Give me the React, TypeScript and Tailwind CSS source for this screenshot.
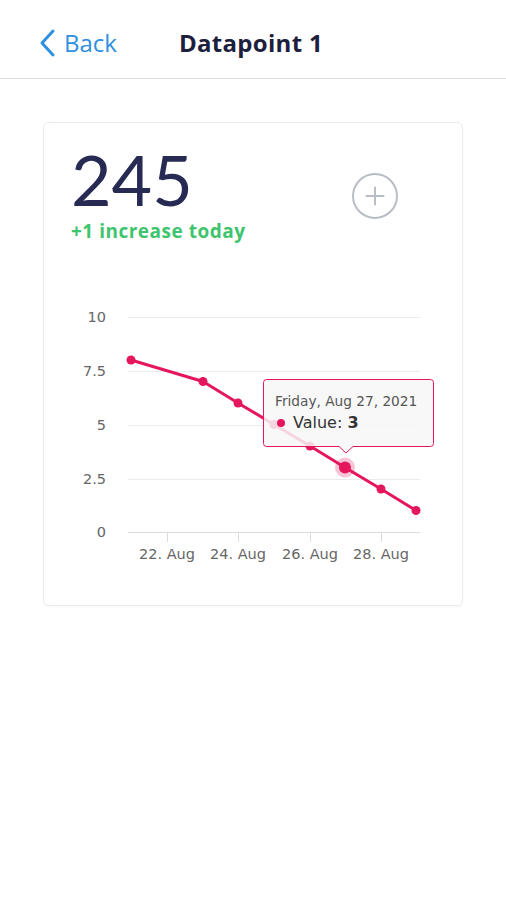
import type { FC } from 'react';

// Datapoint detail screen: header with back link, stat card with a line chart.

type Point = { x: number; y: number };

const PINK = '#e5175c';
const CHART_FONT = '"DejaVu Sans", Verdana, sans-serif';

// chart coords are relative to the svg (page x - 44, page y - 280)
const points: Point[] = [
  { x: 87, y: 80 },
  { x: 159, y: 101.5 },
  { x: 194, y: 123 },
  { x: 230, y: 144.5 },
  { x: 266, y: 166 },
  { x: 301, y: 187.5 },
  { x: 337, y: 209 },
  { x: 372, y: 230.5 },
];

const yTicks = [
  { label: '10', y: 37 },
  { label: '7.5', y: 91 },
  { label: '5', y: 145 },
  { label: '2.5', y: 199 },
  { label: '0', y: 252 },
];

const xTicks = [
  { label: '22. Aug', x: 123 },
  { label: '24. Aug', x: 194 },
  { label: '26. Aug', x: 266 },
  { label: '28. Aug', x: 337 },
];

const Chart: FC = () => {
  const line = points.map((p, i) => `${i === 0 ? 'M' : 'L'}${p.x} ${p.y}`).join(' ');
  const active = points[5];
  return (
    <svg width={420} height={300} className="block" style={{ fontFamily: CHART_FONT }}>
      {yTicks.map((t) => (
        <g key={t.label}>
          <line x1={84} x2={376} y1={t.y + 0.5} y2={t.y + 0.5} stroke={t.label === '0' ? '#d8dce2' : '#e9ecef'} strokeWidth={1} />
          <text x={62} y={t.y + 5} textAnchor="end" fontSize={14.5} fill="#666">
            {t.label}
          </text>
        </g>
      ))}
      {xTicks.map((t) => (
        <g key={t.label}>
          <line x1={t.x + 0.5} x2={t.x + 0.5} y1={252} y2={262} stroke="#d8dce2" />
          <text x={t.x} y={279} textAnchor="middle" fontSize={14.5} fill="#666">
            {t.label}
          </text>
        </g>
      ))}
      <path d={line} fill="none" stroke={PINK} strokeWidth={3} strokeLinejoin="round" />
      {points.map((p, i) =>
        i === 5 ? null : <circle key={i} cx={p.x} cy={p.y} r={4.5} fill={PINK} />,
      )}
      <circle cx={active.x} cy={active.y} r={10} fill={PINK} fillOpacity={0.25} />
      <circle cx={active.x} cy={active.y} r={6} fill={PINK} />
      {/* tooltip */}
      <path
        d="M222.5 99.5 H386.5 Q389.5 99.5 389.5 102.5 V163.5 Q389.5 166.5 386.5 166.5 H309 L302 173 L295 166.5 H222.5 Q219.5 166.5 219.5 163.5 V102.5 Q219.5 99.5 222.5 99.5 Z"
        fill="#f7f7f7"
        fillOpacity={0.85}
        stroke={PINK}
        strokeWidth={1}
      />
      <text x={231} y={126} fontSize={13.7} fill="#555">
        Friday, Aug 27, 2021
      </text>
      <circle cx={237} cy={143} r={4} fill={PINK} />
      <text x={249} y={148} fontSize={16} fill="#333">
        Value: <tspan fontWeight={700}>3</tspan>
      </text>
    </svg>
  );
};

const PlusCircle: FC = () => (
  <svg width={48} height={48} viewBox="0 0 48 48" fill="none" stroke="#b9bdc5" strokeWidth={2} strokeLinecap="round">
    <circle cx={24} cy={24} r={22} />
    <path d="M24 15.5v17M15.5 24h17" />
  </svg>
);

export default function App() {
  return (
    <div className="min-h-[900px] w-[506px] bg-white" style={{ fontFamily: '"Open Sans", Lato, sans-serif' }}>
      <header className="flex h-[79px] items-center border-b border-[#dcdcdc] pt-[8px]">
        <button type="button" className="ml-[38px] flex items-center text-[#2f8fe0]">
          <svg width={20} height={30} viewBox="0 0 20 30" fill="none" stroke="currentColor" strokeWidth={3} strokeLinecap="round" strokeLinejoin="round">
            <path d="M15 3 L4 15 L15 27" />
          </svg>
          <span className="ml-[6px] text-[24px] leading-none">Back</span>
        </button>
        <h1 className="ml-[62px] text-[24px] font-bold leading-none tracking-[0.3px] text-[#1d203d]">Datapoint 1</h1>
      </header>

      <div className="mx-[43px] mt-[43px] w-[420px] rounded-md border border-[#ececec] bg-white pb-[25px] shadow-[0_1px_3px_rgba(0,0,0,0.04)]">
        <div className="flex h-[157px] items-start justify-between pl-[27px] pr-[63px] pt-[28px]">
          <div>
            <div className="font-['Lato'] text-[70px] leading-[56px] text-[#272a52]">245</div>
            <div className="mt-[15px] text-[19px] font-bold leading-none tracking-[0.5px] text-[#3ec46d]">+1 increase today</div>
          </div>
          <div className="mt-[21px]">
            <PlusCircle />
          </div>
        </div>
        <Chart />
      </div>
    </div>
  );
}
